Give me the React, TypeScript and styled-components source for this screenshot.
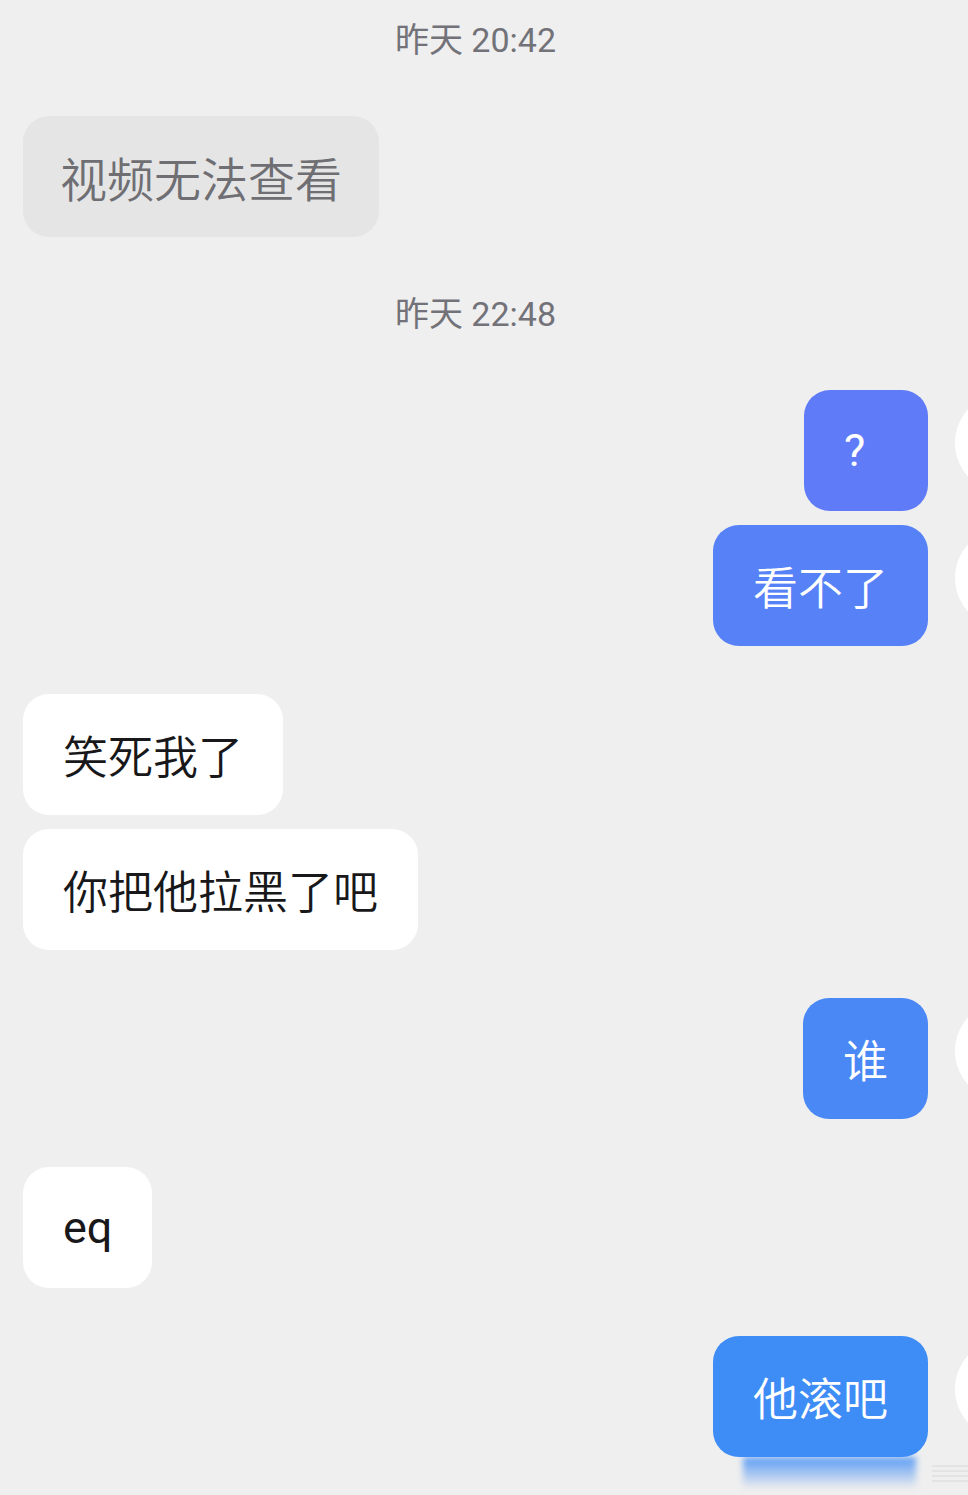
import React from 'react'
import styled, { createGlobalStyle } from 'styled-components'

const GlobalStyle = createGlobalStyle`
  html, body {
    margin: 0;
    padding: 0;
    background: #efefef;
    overflow-x: hidden;
  }
  body {
    font-family: Roboto, "Noto Sans CJK SC", sans-serif;
  }
`

type Msg = { text: string; tone?: string; latin?: boolean }
type Block =
  | { kind: 'time'; text: string }
  | { kind: 'in'; variant?: 'muted'; items: Msg[] }
  | { kind: 'out'; items: Msg[] }

const thread: Block[] = [
  { kind: 'time', text: '昨天 20:42' },
  { kind: 'in', variant: 'muted', items: [{ text: '视频无法查看' }] },
  { kind: 'time', text: '昨天 22:48' },
  {
    kind: 'out',
    items: [
      { text: '?', tone: '#5f7bf7', latin: true },
      { text: '看不了', tone: '#5681f7' },
    ],
  },
  { kind: 'in', items: [{ text: '笑死我了' }, { text: '你把他拉黑了吧' }] },
  { kind: 'out', items: [{ text: '谁', tone: '#4a88f6' }] },
  { kind: 'in', items: [{ text: 'eq', latin: true }] },
  { kind: 'out', items: [{ text: '他滚吧', tone: '#3e8cf6' }] },
]

const Screen = styled.div`
  width: 968px;
  min-height: 1495px;
  box-sizing: border-box;
  padding: 20px 40px 0 23px;
  display: flex;
  flex-direction: column;
  overflow: hidden;
`

const Time = styled.div`
  text-align: center;
  font-size: 34px;
  line-height: 40px;
  color: #727278;
  margin: 9px 0 56px;

  &:first-child {
    margin-top: 0;
  }
`

const Group = styled.div<{ $side: 'in' | 'out' }>`
  display: flex;
  flex-direction: column;
  align-items: ${p => (p.$side === 'out' ? 'flex-end' : 'flex-start')};
  gap: 14px;
  margin-bottom: 48px;
`

const Row = styled.div`
  display: flex;
  align-items: flex-start;
  gap: 27px;
  margin-right: -127px;
`

const Avatar = styled.div`
  width: 100px;
  height: 100px;
  margin-top: 3px;
  border-radius: 50%;
  background: #ffffff;
  flex-shrink: 0;
`

const Bubble = styled.div<{ $tone?: string; $muted?: boolean; $latin?: boolean; $tail?: boolean }>`
  position: relative;
  box-sizing: border-box;
  min-width: 124px;
  height: 121px;
  display: flex;
  align-items: center;
  border-radius: 26px;
  font-weight: ${p => (p.$latin ? 400 : 350)};
  font-size: ${p => (p.$muted ? '47px' : '45px')};
  padding: ${p => (p.$muted ? '0 37px' : '0 40px')};
  background: ${p => p.$tone ?? (p.$muted ? '#e5e5e5' : '#ffffff')};
  color: ${p => (p.$tone ? '#ffffff' : p.$muted ? '#6e6e73' : '#18181a')};
  white-space: nowrap;

  ${p =>
    p.$tail &&
    `
    &::after {
      content: '';
      position: absolute;
      top: 100%;
      left: 30px;
      right: 12px;
      height: 30px;
      background: linear-gradient(rgba(62, 140, 246, 0.85), rgba(190, 205, 235, 0.2));
      filter: blur(3px);
    }
  `}
`

const Watermark = styled.div`
  position: absolute;
  top: 100%;
  right: -46px;
  margin-top: 8px;
  width: 42px;
  height: 18px;
  background: repeating-linear-gradient(
    #e0e0e0 0 2px,
    transparent 2px 5px
  );
  opacity: 0.8;
`

export default function App() {
  return (
    <>
      <GlobalStyle />
      <Screen>
        {thread.map((block, i) => {
          if (block.kind === 'time') {
            return <Time key={i}>{block.text}</Time>
          }
          if (block.kind === 'in') {
            return (
              <Group key={i} $side="in">
                {block.items.map((m, j) => (
                  <Bubble key={j} $muted={block.variant === 'muted'} $latin={m.latin}>
                    {m.text}
                  </Bubble>
                ))}
              </Group>
            )
          }
          const last = i === thread.length - 1
          return (
            <Group key={i} $side="out">
              {block.items.map((m, j) => (
                <Row key={j}>
                  <Bubble $tone={m.tone} $latin={m.latin} $tail={last}>
                    {m.text}
                    {last && <Watermark />}
                  </Bubble>
                  <Avatar />
                </Row>
              ))}
            </Group>
          )
        })}
      </Screen>
    </>
  )
}
